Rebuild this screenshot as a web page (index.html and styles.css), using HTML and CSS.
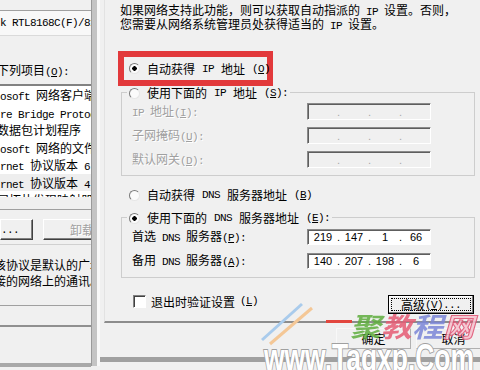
FILE: index.html
```html
<!DOCTYPE html>
<html lang="zh-CN">
<head>
    <meta charset="UTF-8">
    <meta name="viewport" content="width=device-width, initial-scale=1.0">
    <title>Internet 协议版本 4 (TCP/IPv4) 属性</title>
    <link rel="stylesheet" href="styles.css">
</head>
<body>
    <!-- window behind: connection properties -->
    <div class="back-win">
        <div class="adapter-box"><span class="en">k RTL8168C(F)/8169</span></div>
        <div class="items-label">下列项目<span class="en">(<u>O</u>):</span></div>
        <div class="item-list">
            <div class="items">
                <div class="item"><span class="en">osoft </span>网络客户端</div>
                <div class="item"><span class="en">re Bridge Protocol</span></div>
                <div class="item cut">数据包计划程序</div>
                <div class="item"><span class="en">osoft </span>网络的文件和打印机共享</div>
                <div class="item"><span class="en">rnet </span>协议版本<span class="en"> 6 (TCP/IPv6)</span></div>
                <div class="item selected"><span class="en">rnet </span>协议版本<span class="en"> 4 (TCP/IPv4)</span></div>
                <div class="item cut">层拓扑发现映射器</div>
            </div>
        </div>
        <div class="btn-row">
            <div class="btn btn-a"><span class="en">...</span></div>
            <div class="btn btn-b">卸载<span class="en">(U)</span></div>
        </div>
        <div class="desc">
            <p>该协议是默认的广域网络协议</p>
            <p>接的网络上的通讯。</p>
        </div>
        <div class="lower-line"></div>
    </div>

    <div class="sep"></div>

    <!-- front dialog: general tab -->
    <div class="dialog">
        <div class="page">
            <p class="intro">如果网络支持此功能，则可以获取自动指派的<span class="en"> IP </span>设置。否则，<br>您需要从网络系统管理员处获得适当的<span class="en"> IP </span>设置。</p>

            <div class="highlight">
                <div class="opt"><span class="radio on"></span>自动获得<span class="en"> IP </span>地址<span class="en">(<u>O</u>)</span></div>
            </div>

            <div class="group">
                <div class="group-title opt"><span class="radio"></span>使用下面的<span class="en"> IP </span>地址<span class="en">(<u>S</u>):</span></div>
                <div class="fields">
                    <span class="off"><span class="en">IP </span>地址<span class="en">(<u>I</u>):</span></span>
                    <div class="ip disabled"><span class="seg"></span><span class="dot">.</span><span class="seg"></span><span class="dot">.</span><span class="seg"></span><span class="dot">.</span><span class="seg"></span></div>
                    <span class="off">子网掩码<span class="en">(<u>U</u>):</span></span>
                    <div class="ip disabled"><span class="seg"></span><span class="dot">.</span><span class="seg"></span><span class="dot">.</span><span class="seg"></span><span class="dot">.</span><span class="seg"></span></div>
                    <span class="off">默认网关<span class="en">(<u>D</u>):</span></span>
                    <div class="ip disabled"><span class="seg"></span><span class="dot">.</span><span class="seg"></span><span class="dot">.</span><span class="seg"></span><span class="dot">.</span><span class="seg"></span></div>
                </div>
            </div>

            <div class="opt dns-auto"><span class="radio"></span>自动获得<span class="en"> DNS </span>服务器地址<span class="en">(<u>B</u>)</span></div>

            <div class="group dns">
                <div class="group-title opt"><span class="radio on"></span>使用下面的<span class="en"> DNS </span>服务器地址<span class="en">(<u>E</u>):</span></div>
                <div class="fields">
                    <span>首选<span class="en"> DNS </span>服务器<span class="en">(<u>P</u>):</span></span>
                    <div class="ip"><span class="seg">219</span><span class="dot">.</span><span class="seg">147</span><span class="dot">.</span><span class="seg">1</span><span class="dot">.</span><span class="seg">66</span></div>
                    <span>备用<span class="en"> DNS </span>服务器<span class="en">(<u>A</u>):</span></span>
                    <div class="ip"><span class="seg">140</span><span class="dot">.</span><span class="seg">207</span><span class="dot">.</span><span class="seg">198</span><span class="dot">.</span><span class="seg">6</span></div>
                </div>
            </div>

            <div class="foot">
                <div class="check"><span class="box"></span>退出时验证设置<span class="en">(<u>L</u>)</span></div>
                <div class="btn adv"><span class="focus">高级<span class="en">(<u>V</u>)...</span></span></div>
            </div>
        </div>
        <div class="actions">
            <div class="btn">确定</div>
            <div class="btn">取消</div>
        </div>
    </div>

    <!-- site watermark over the corner -->
    <svg class="watermark" width="220" height="72" viewBox="0 0 220 72">
        <line x1="2" y1="42" x2="42" y2="6" stroke="#a9cbec" stroke-width="3"/>
        <line x1="10" y1="46" x2="52" y2="10" stroke="#f4c796" stroke-width="3"/>
        <rect x="66" y="22" width="26" height="3" fill="#e2463e"/>
        <text x="90" y="39" class="wm-cn" textLength="124" lengthAdjust="spacingAndGlyphs"><tspan fill="#5fae3e">聚</tspan><tspan fill="#e65b74">教</tspan><tspan fill="#7b86d8">程</tspan><tspan fill="#f6c3cf" stroke="#e05070" stroke-width="1">网</tspan></text>
        <text x="4" y="73" class="wm-en" textLength="210" lengthAdjust="spacingAndGlyphs">www.Tagxp.Com</text>
    </svg>
</body>
</html>
```

FILE: styles.css
```css
body {
    margin: 0;
    width: 480px;
    height: 370px;
    overflow: hidden;
    display: flex;
    position: relative;
    background: #f0f0f0;
    font-family: "Noto Sans CJK SC", sans-serif;
    font-size: 12px;
    color: #000;
}

p {
    margin: 0;
}

.en {
    font-family: "Liberation Mono", "Noto Sans CJK SC", monospace;
    font-size: 11px;
    letter-spacing: -0.6px;
}

/* window behind */
.back-win {
    width: 91px;
    height: 367px;
    flex: none;
    box-sizing: border-box;
    overflow: hidden;
    display: flex;
    flex-direction: column;
    white-space: nowrap;
    border-bottom: 4px solid #a8a8a8;
}

.adapter-box {
    margin-top: 10px;
    height: 26px;
    box-sizing: border-box;
    padding-top: 4px;
    line-height: 12px;
    background: #f8f8f8;
    border-top: 1px solid #a0a0a0;
    border-bottom: 1px solid #dadada;
}

.items-label {
    margin-top: 28px;
    line-height: 12px;
    text-indent: -3px;
}

.item-list {
    margin-top: 6px;
    height: 126px;
    box-sizing: border-box;
    border-top: 2px solid #828282;
    border-bottom: 1px solid #a0a0a0;
}

.items {
    height: 111px;
    overflow: hidden;
    background: #fff;
}

.item {
    height: 17.5px;
    line-height: 17.5px;
}

.item.cut {
    text-indent: -3px;
}

.item.selected {
    background: #eeeeee;
}

.btn-row {
    margin-top: 9px;
    height: 21px;
    display: flex;
    gap: 10px;
}

.btn {
    flex: none;
    box-sizing: border-box;
    display: flex;
    align-items: center;
    justify-content: center;
    line-height: 12px;
    background: #f0f0f0;
    border: 1px solid;
    border-color: #fff #404040 #404040 #fff;
    box-shadow: inset -1px -1px #808080;
}

.btn-a {
    width: 33px;
    justify-content: flex-start;
}

.btn-b {
    width: 75px;
    justify-content: flex-start;
    padding-left: 26px;
    color: #a0a0a0;
    text-shadow: 1px 1px 0 #fff;
}

.desc {
    margin-top: 4px;
    height: 62px;
    box-sizing: border-box;
    padding-top: 12px;
    line-height: 16px;
    text-indent: -6px;
    border-top: 1px solid #d0d0d0;
    border-bottom: 1px solid #a0a0a0;
}

.lower-line {
    margin-top: 19px;
    border-top: 2px solid #909090;
}

.sep {
    width: 9px;
    height: 366px;
    flex: none;
    box-sizing: border-box;
    background: #c4c4c4;
    border-left: 1px solid #9a9a9a;
    border-right: 3px solid #f8f8f8;
}

/* front dialog */
.dialog {
    flex: 1;
    height: 362px;
    box-sizing: border-box;
    display: flex;
    flex-direction: column;
    border-bottom: 5px solid #a0a0a0;
}

.page {
    margin-left: 4px;
    height: 323px;
    box-sizing: border-box;
    padding-top: 4px;
    border-left: 1px solid #e2e2e2;
    border-bottom: 2px solid #8c8c8c;
    white-space: nowrap;
}

.intro {
    margin-left: 15px;
    line-height: 11px;
}

.highlight {
    margin: 19px 0 0 13px;
    width: 155px;
    height: 35px;
    box-sizing: border-box;
    display: flex;
    align-items: center;
    padding-left: 5px;
    border: 6px solid #e2393b;
}

.opt {
    display: flex;
    align-items: center;
    gap: 7px;
    line-height: 12px;
}

.radio {
    width: 11px;
    height: 11px;
    flex: none;
    box-sizing: border-box;
    border-radius: 50%;
    border: 1px solid;
    border-color: #7a7a7a #e6e6e6 #e6e6e6 #7a7a7a;
    background: #fbfbfb;
}

.radio.on {
    background: radial-gradient(circle, #000 0 2px, #fbfbfb 2.5px);
}

.group {
    margin: 6px 5px 0 16px;
    border: 1px solid #cdcdcd;
}

.group.dns {
    margin-top: 15px;
}

.group-title {
    width: fit-content;
    height: 14px;
    margin: -7px 0 0 5px;
    padding: 0 2px;
    background: #f0f0f0;
}

.fields {
    display: grid;
    grid-template-columns: 175px 124px;
    grid-auto-rows: 17px;
    row-gap: 7px;
    align-items: center;
    padding: 3px 0 7px 10px;
    line-height: 12px;
}

.dns .fields {
    grid-auto-rows: 16px;
    row-gap: 8px;
    padding: 4px 0 8px 10px;
}

.off {
    color: #a0a0a0;
    text-shadow: 1px 1px 0 #fff;
}

.ip {
    height: 100%;
    box-sizing: border-box;
    display: flex;
    align-items: center;
    padding-left: 1px;
    background: #fff;
    border: 1px solid;
    border-color: #8a8a8a #fff #fff #8a8a8a;
    box-shadow: inset 1px 1px #5e5e5e;
    font-family: "Liberation Sans", sans-serif;
    font-size: 11px;
}

.ip.disabled {
    background: #f0f0f0;
    color: #a8a8a8;
}

.seg {
    width: 28px;
    text-align: center;
}

.dot {
    width: 3px;
    text-align: center;
}

.dns-auto {
    margin: 12px 0 0 24px;
    height: 14px;
}

.foot {
    margin: 17px 6px 0 28px;
    display: flex;
    justify-content: space-between;
    align-items: flex-start;
}

.check {
    display: flex;
    align-items: center;
    gap: 5px;
    line-height: 13px;
}

.box {
    width: 13px;
    height: 13px;
    box-sizing: border-box;
    background: #fff;
    border: 1px solid;
    border-color: #808080 #fff #fff #808080;
    box-shadow: inset 1px 1px #404040;
}

.adv {
    width: 86px;
    height: 19px;
    border: 1px solid #000;
    box-shadow: inset -1px -1px #808080, inset 1px 1px #fff;
    padding: 2px;
}

.focus {
    flex: 1;
    height: 100%;
    box-sizing: border-box;
    display: flex;
    align-items: center;
    justify-content: center;
    border: 1px dotted #000;
}

.actions {
    margin: 5px -11px 0 0;
    display: flex;
    justify-content: flex-end;
    gap: 5px;
}

.actions .btn {
    width: 75px;
    height: 21px;
    border-color: #f8f8f8 #b0b0b0 #b0b0b0 #f8f8f8;
    box-shadow: none;
}

/* watermark */
.watermark {
    position: absolute;
    left: 260px;
    top: 298px;
    pointer-events: none;
}

.wm-cn {
    font-family: "Noto Sans CJK SC", sans-serif;
    font-size: 27px;
    font-weight: bold;
    font-style: italic;
    opacity: 0.85;
}

.wm-en {
    font-family: "Liberation Sans", sans-serif;
    font-size: 38px;
    font-weight: bold;
    fill: #fff;
    stroke: #a0a0a0;
    stroke-width: 2px;
    paint-order: stroke;
}
```
